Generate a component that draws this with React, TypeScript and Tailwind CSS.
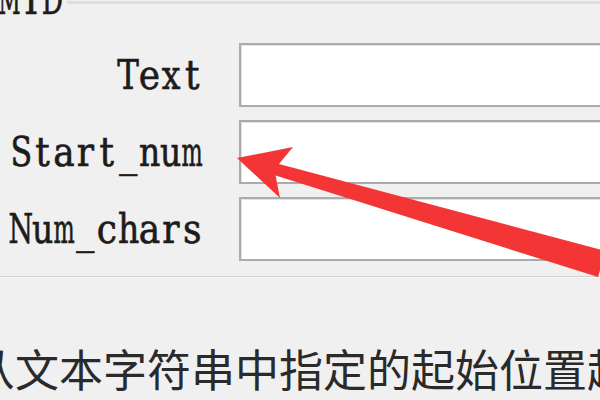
import React from "react";

// per-glyph horizontal squeeze so a proportional serif sits in fixed-width cells
const squeeze: Record<string, string> = {
  S: "scale-x-[0.88]",
  n: "scale-x-[0.92]",
  u: "scale-x-[0.92]",
  m: "scale-x-[0.62]",
  N: "scale-x-[0.78]",
  h: "scale-x-[0.92]",
  T: "scale-x-[0.9]",
  x: "scale-x-[0.92]",
  M: "scale-x-[0.6]",
  D: "scale-x-[0.74]",
};

function Mono({ text }: { text: string }) {
  return (
    <span className="inline-flex scale-y-[1.15] font-['DejaVu_Serif',serif] text-[36px] leading-[40px] text-[#1c1c1c] [-webkit-text-stroke:0.6px_#1c1c1c] whitespace-nowrap">
      {text.split("").map((c, i) => (
        <span key={i} className="inline-flex justify-center w-[21.4px]">
          <span className={`inline-block ${squeeze[c] ?? ""}`}>{c}</span>
        </span>
      ))}
    </span>
  );
}

function Field({ label }: { label: string }) {
  return (
    <div className="grid grid-cols-[239px_1fr] h-[64px] items-center">
      <div className="flex justify-end pr-[36px]">
        <Mono text={label} />
      </div>
      <div className="h-full mr-[-40px] bg-white border-2 border-[#ababab] shadow-[inset_1px_1px_0_#e2e2e2]" />
    </div>
  );
}

export default function App() {
  return (
    <div className="relative w-[600px] h-[400px] overflow-hidden bg-[#f0f0f0]">
      {/* group box header */}
      <div className="flex items-start h-[43px]">
        <div className="mt-[-20px] ml-[-1px]">
          <Mono text="MID" />
        </div>
        <div className="flex-1 mt-[1px] ml-[4px] h-[3px] bg-[#dedede]" />
      </div>

      <div className="flex flex-col gap-[13px]">
        <Field label="Text" />
        <Field label="Start_num" />
        <Field label="Num_chars" />
      </div>

      <div className="mt-[15px] h-[2px] border-t border-[#d2d2d2] bg-[#f7f7f7]" />

      <div className="mt-[73px] ml-[-29px] whitespace-nowrap font-['Liberation_Serif','Noto_Sans_CJK_SC',serif] text-[44px] leading-[44px] text-[#2a2a2a]">
        从文本字符串中指定的起始位置起
      </div>

      {/* red annotation arrow */}
      <svg
        className="absolute left-0 top-0 pointer-events-none"
        width="600"
        height="400"
        viewBox="0 0 600 400"
      >
        <polygon
          points="237,158 293,147 279,164 606,251 598,277 275.6,175.6 280,198"
          fill="#f43535"
        />
      </svg>
    </div>
  );
}
